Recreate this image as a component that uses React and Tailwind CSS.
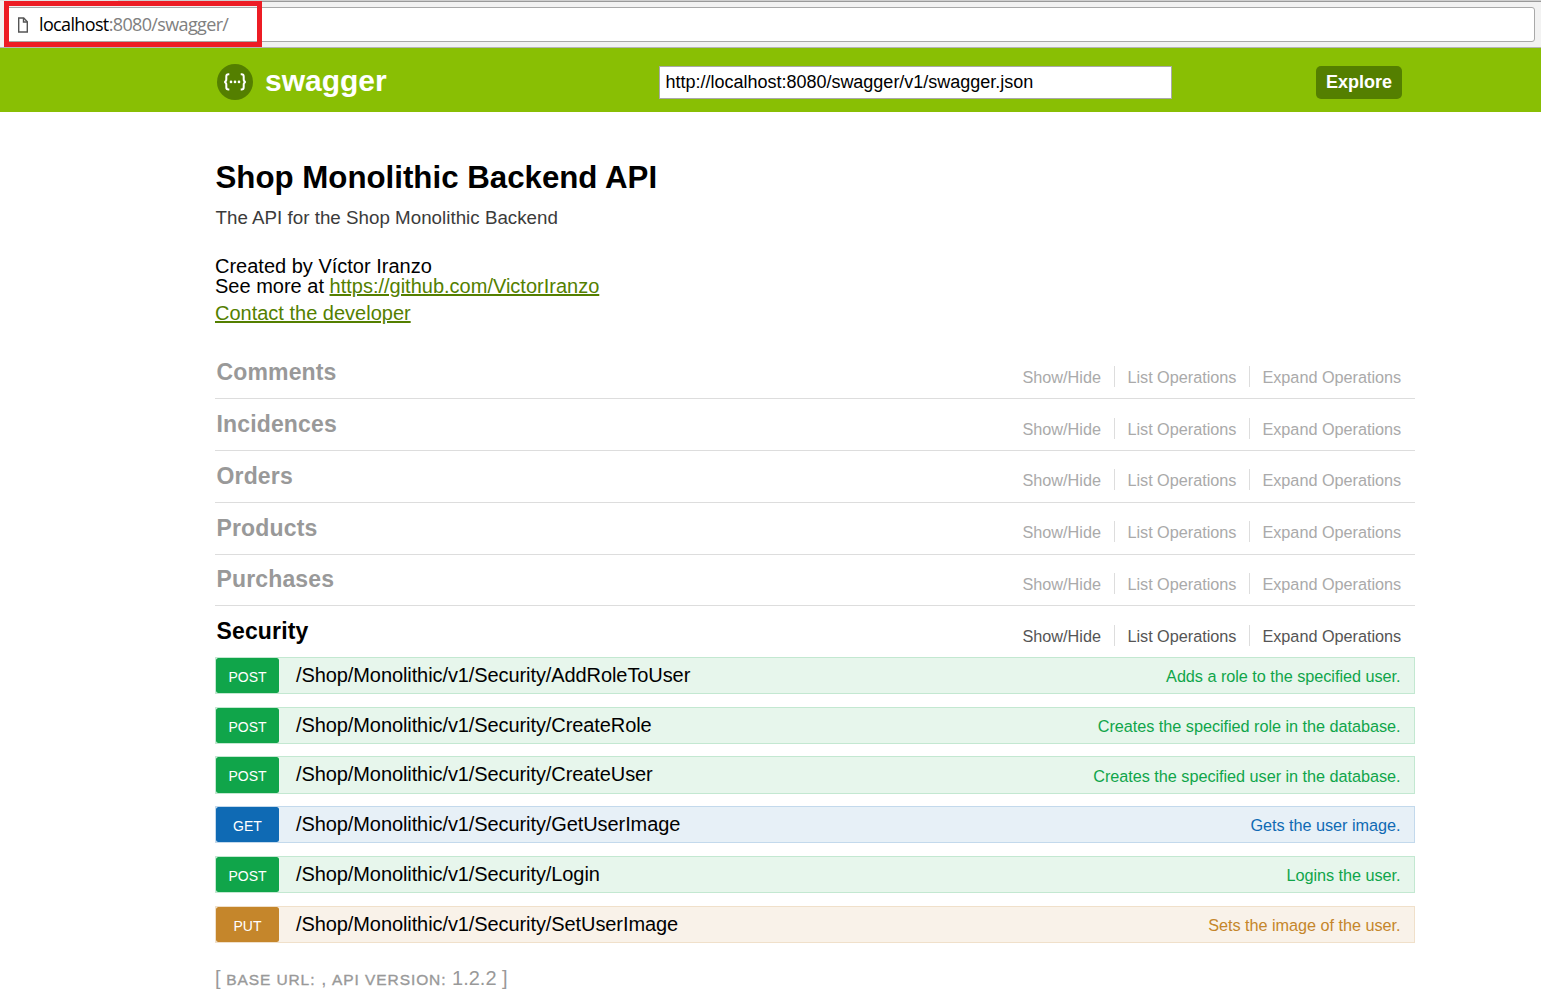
import React from "react";

const resources = ["Comments", "Incidences", "Orders", "Products", "Purchases"];

const operations = [
  { method: "POST", name: "AddRoleToUser", summary: "Adds a role to the specified user." },
  { method: "POST", name: "CreateRole", summary: "Creates the specified role in the database." },
  { method: "POST", name: "CreateUser", summary: "Creates the specified user in the database." },
  { method: "GET", name: "GetUserImage", summary: "Gets the user image." },
  { method: "POST", name: "Login", summary: "Logins the user." },
  { method: "PUT", name: "SetUserImage", summary: "Sets the image of the user." },
];

const tones = {
  POST: { row: "bg-[#e7f6ec] border-[#c3e8d1]", badge: "bg-[#10a54a]", text: "text-[#10a54a]" },
  GET: { row: "bg-[#e7f0f7] border-[#c3d9ec]", badge: "bg-[#0f6ab4]", text: "text-[#0f6ab4]" },
  PUT: { row: "bg-[#f9f2e9] border-[#f0e0ca]", badge: "bg-[#c5862b]", text: "text-[#c5862b]" },
};

function AddressBar() {
  return (
    <div className="relative h-12 bg-[#f2f2f2] border-b border-[#b5b5b5] pt-[7px] pl-[6px] pr-[6px]">
      <div className="absolute left-0 top-0 w-[118px] h-px bg-[#e4e4e4]" />
      <div className="absolute left-[118px] right-0 top-0 h-[2px] bg-[#cfcfcf] border-b border-[#999999]" />
      <div className="flex items-center h-[35px] rounded-[3px] border border-[#a9a9a9] bg-white pl-[11px]">
        <svg width="10" height="16" viewBox="0 0 10 16" fill="none" stroke="#555" strokeWidth="1.4" className="shrink-0">
          <path d="M.7 1h5L9.300 4.700V15H.7z" />
          <path d="M5.500 1v4h3.800" />
        </svg>
        <span className="ml-[11px] mb-[2px] text-[18px] leading-none font-['Open_Sans',sans-serif] tracking-[-0.64px] text-[#808080] whitespace-nowrap">
          <span className="text-black">localhost</span>:8080/swagger/
        </span>
      </div>
      <div className="absolute left-[4px] top-px w-[258px] h-[46px] border-[5px] border-[#ed1c24]" />
    </div>
  );
}

function Logo() {
  return (
    <svg width="36" height="36" viewBox="0 0 36 36" className="shrink-0">
      <circle cx="18" cy="18" r="18" fill="#547f00" />
      <g fill="none" stroke="#fff" strokeWidth="2">
        <path d="M12.3 10.3h-.8c-1.6 0-2.2.8-2.2 2.3v2.6c0 1.6-.6 2.5-2 2.7 1.4.2 2 1.1 2 2.7v2.6c0 1.5.6 2.3 2.2 2.3h.8" />
        <path d="M23.7 10.3h.8c1.6 0 2.2.8 2.2 2.3v2.6c0 1.6.6 2.5 2 2.7-1.4.2-2 1.1-2 2.7v2.6c0 1.5-.6 2.3-2.2 2.3h-.8" />
      </g>
      <g fill="#fff">
        <circle cx="14" cy="17.9" r="1.3" />
        <circle cx="18" cy="17.9" r="1.3" />
        <circle cx="22" cy="17.9" r="1.3" />
      </g>
    </svg>
  );
}

function Header() {
  return (
    <header className="h-16 bg-[#89bf04]">
      <div className="flex items-center w-[1200px] ml-[215px] h-full pb-px">
        <div className="flex items-center w-[444px] pl-[2px] pt-[4px]">
          <Logo />
          <span className="ml-[12px] mb-px text-[30px] leading-none font-bold text-white">swagger</span>
        </div>
        <div className="flex items-center w-[513px] h-[33px] mt-[6px] pl-[5.5px] pb-[2px] bg-white border border-[#a9a9a9] text-[18px] tracking-[-0.01px] text-black leading-none">
          http://localhost:8080/swagger/v1/swagger.json
        </div>
        <div className="flex items-center justify-center ml-[144px] mt-[6px] w-[86px] h-[33px] pb-px rounded-[5px] bg-[#547f00] text-[18px] leading-none font-bold text-white">
          Explore
        </div>
      </div>
    </header>
  );
}

function Actions({ active }) {
  return (
    <ul className={`flex self-start mt-[18.25px] mr-[13.8px] text-[16.25px] tracking-[-0.02px] leading-[23px] ${active ? "text-[#555555]" : "text-[#aaaaaa]"}`}>
      <li className="h-[21px] pr-[13px] border-r border-[#dddddd]">Show/Hide</li>
      <li className="h-[21px] px-[12.5px] border-r border-[#dddddd]">List Operations</li>
      <li className="h-[21px] pl-[12.5px]">Expand Operations</li>
    </ul>
  );
}

function ResourceHeading({ title, active }) {
  return (
    <div className={`flex justify-between h-[51.75px] ${active ? "" : "border-b border-[#dddddd]"}`}>
      <h2 className={`pl-[1.5px] pt-[10.75px] text-[23px] leading-[28px] font-bold tracking-[0.15px] ${active ? "text-black" : "text-[#999999]"}`}>
        {title}
      </h2>
      <Actions active={active} />
    </div>
  );
}

function Operation({ method, name, summary }) {
  const tone = tones[method];
  return (
    <li className={`flex h-[37.25px] mb-[12.5px] border ${tone.row}`}>
      <span className={`w-[63px] h-full rounded-[2.5px] pt-[9px] text-center text-[14px] leading-[20px] text-white ${tone.badge}`}>
        {method}
      </span>
      <span className="pl-[17px] pt-[5px] text-[20px] leading-[24px] tracking-[-0.09px] text-black">
        /Shop/Monolithic/v1/Security/{name}
      </span>
      <span className={`ml-auto pr-[13.5px] pt-[7.15px] text-[16.25px] tracking-[-0.04px] leading-[22px] ${tone.text}`}>{summary}</span>
    </li>
  );
}

export default function App() {
  return (
    <div className="w-[1541px] h-[995px] overflow-hidden bg-white font-['Liberation_Sans',Arial,sans-serif]">
      <AddressBar />
      <Header />
      <main className="w-[1200px] ml-[215px]">
        <section className="h-[235.55px] pt-[48px]">
          <h1 className="pl-[0.5px] text-[31.25px] leading-[36px] font-bold text-black">Shop Monolithic Backend API</h1>
          <p className="pl-[0.5px] mt-[11px] text-[18.75px] leading-[22px] tracking-[0.015px] text-[#3b3b3b]">The API for the Shop Monolithic Backend</p>
          <div className="mt-[27px] text-[20px] leading-[20px] text-black">
            <p>Created by Víctor Iranzo</p>
            <p>
              See more at <a className="text-[#547f00] underline">https://github.com/VictorIranzo</a>
            </p>
            <p className="mt-[7px]">
              <a className="text-[#547f00] underline">Contact the developer</a>
            </p>
          </div>
        </section>
        {resources.map((title) => (
          <ResourceHeading key={title} title={title} />
        ))}
        <ResourceHeading title="Security" active />
        <ul className="-mt-[1.2px]">
          {operations.map((op) => (
            <Operation key={op.name} {...op} />
          ))}
        </ul>
        <footer className="pt-[11px] text-[20px] leading-[24px] text-[#999999] whitespace-pre">
          [ <span className="text-[15.5px] tracking-[0.92px] [-webkit-text-stroke:0.35px_#999999]">BASE URL:</span> , <span className="text-[15.5px] tracking-[0.92px] [-webkit-text-stroke:0.35px_#999999]">API VERSION:</span> 1.2.2 ]
        </footer>
      </main>
    </div>
  );
}
